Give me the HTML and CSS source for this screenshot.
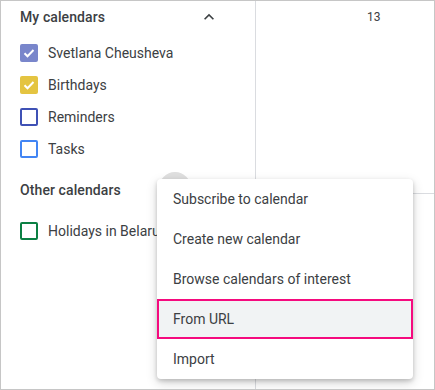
FILE: index.html
```html
<!DOCTYPE html>
<html>
<head>
<meta charset="utf-8">
<link rel="stylesheet" href="styles.css">
</head>
<body>
<div class="frame">
  <aside class="sidebar">
    <div class="section-head">
      <span class="section-title">My calendars</span>
      <svg class="chev" width="20" height="20" viewBox="0 0 24 24"><path d="M7.41 15.41L12 10.83l4.59 4.58L18 14l-6-6-6 6z" fill="#3c4043"/></svg>
    </div>
    <ul class="cal-list">
      <li class="cal-item"><span class="cb filled lavender"><svg width="18" height="18" viewBox="0 0 18 18"><path d="M4.5 9.2l3 3 6-6.2" fill="none" stroke="#fff" stroke-width="2"/></svg></span>Svetlana Cheusheva</li>
      <li class="cal-item"><span class="cb filled banana"><svg width="18" height="18" viewBox="0 0 18 18"><path d="M4.5 9.2l3 3 6-6.2" fill="none" stroke="#fff" stroke-width="2"/></svg></span>Birthdays</li>
      <li class="cal-item"><span class="cb blueberry"></span>Reminders</li>
      <li class="cal-item"><span class="cb peacock"></span>Tasks</li>
    </ul>
    <div class="section-head other">
      <span class="section-title">Other calendars</span>
    </div>
    <ul class="cal-list">
      <li class="cal-item holiday"><span class="cb basil"></span>Holidays in Belarus</li>
    </ul>
  </aside>
  <main class="grid">
    <div class="day-cell"><span class="day-num">13</span></div>
    <div class="day-cell lower"></div>
  </main>
  <div class="hover-circle"></div>
  <ul class="menu">
    <li class="menu-item">Subscribe to calendar</li>
    <li class="menu-item">Create new calendar</li>
    <li class="menu-item">Browse calendars of interest</li>
    <li class="menu-item active">From URL</li>
    <li class="menu-item">Import</li>
  </ul>
</div>
</body>
</html>
```
FILE: styles.css
```css
html, body {
  margin: 0;
  padding: 0;
  background: #fff;
}
body {
  font-family: Roboto, "Liberation Sans", sans-serif;
  color: #3c4043;
}
.frame {
  position: relative;
  width: 435px;
  height: 390px;
  box-sizing: border-box;
  border: 1px solid #c6c6c6;
  display: flex;
  overflow: hidden;
}
.sidebar {
  flex: none;
  border-right: 1px solid #dadce0;
  padding-left: 19px;
  box-sizing: border-box;
  width: 255px;
}
.section-head {
  height: 32px;
  display: flex;
  align-items: center;
  justify-content: space-between;
  padding-right: 36px;
}
.section-head.other {
  margin-top: 8px;
  height: 34px;
}
.section-title {
  font-size: 14px;
  font-weight: 500;
  letter-spacing: 0.1px;
}
.chev {
  display: block;
}
.cal-list {
  list-style: none;
  margin: 4px 0 0 0;
  padding: 0;
}
.cal-item {
  height: 32px;
  display: flex;
  align-items: center;
  font-size: 14px;
  gap: 10px;
  white-space: nowrap;
}
.cal-item.holiday {
  margin-top: 8px;
}
.cb {
  width: 18px;
  height: 18px;
  box-sizing: border-box;
  border-radius: 2px;
  border: 2px solid;
  flex: none;
  position: relative;
}
.cb svg {
  position: absolute;
  left: -2px;
  top: -2px;
}
.cb.filled.lavender { background: #7986cb; border-color: #7986cb; }
.cb.filled.banana { background: #e4c441; border-color: #e4c441; }
.cb.blueberry { border-color: #3f51b5; }
.cb.peacock { border-color: #4285f4; }
.cb.basil { border-color: #0b8043; }
.grid {
  flex: 1;
  display: flex;
  flex-direction: column;
}
.day-cell {
  height: 193px;
  border-bottom: 1px solid #dadce0;
  font-size: 12px;
  padding-left: 111px;
  padding-top: 9px;
  box-sizing: border-box;
}
.day-cell.lower {
  flex: 1;
  border-bottom: none;
}
.day-num {
  font-size: 12px;
  font-weight: 400;
}
.hover-circle {
  position: absolute;
  left: 158px;
  top: 171px;
  width: 32px;
  height: 32px;
  border-radius: 50%;
  background: #dfdfdf;
}
.menu {
  position: absolute;
  left: 156px;
  top: 178px;
  width: 256px;
  margin: 0;
  padding: 0;
  list-style: none;
  background: #fff;
  border-radius: 4px;
  box-shadow: 0 2px 4px rgba(0,0,0,0.18), 0 4px 12px rgba(0,0,0,0.16);
}
.menu-item {
  height: 40px;
  display: flex;
  align-items: center;
  padding-left: 16px;
  font-size: 14px;
  color: #3c4043;
  box-sizing: border-box;
}
.menu-item.active {
  background: #f1f3f4;
  border: 2px solid #f50a7e;
  padding-left: 14px;
}
```
